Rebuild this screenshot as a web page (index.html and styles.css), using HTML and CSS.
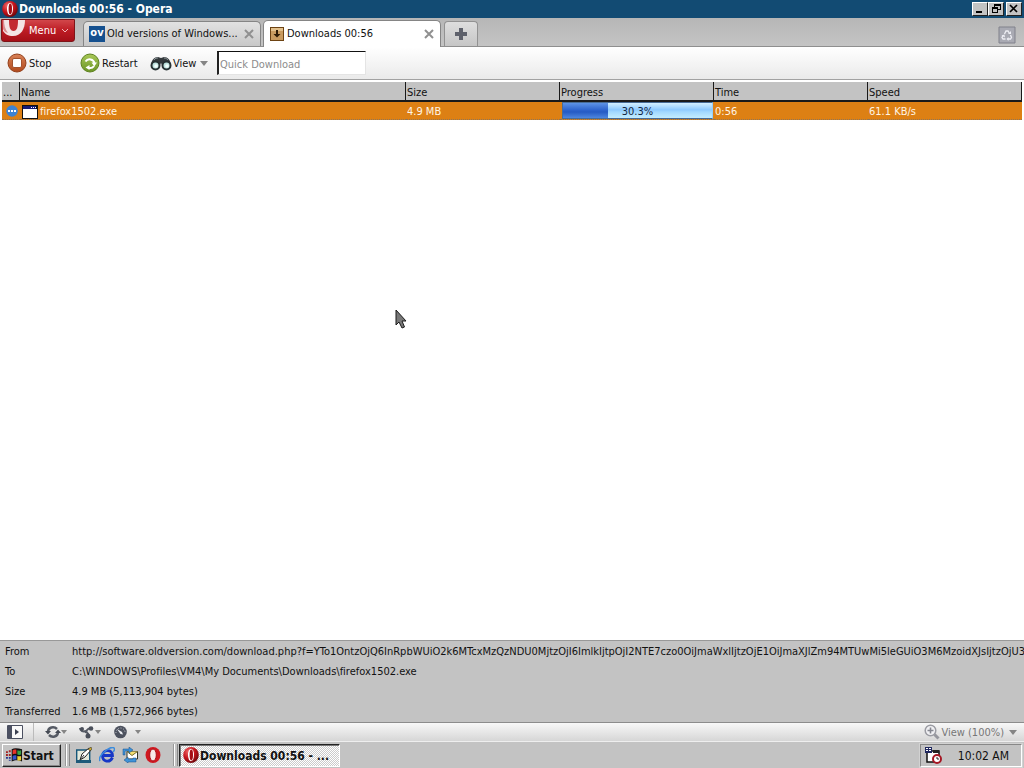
FILE: index.html
```html
<!DOCTYPE html>
<html lang="en">
<head>
<meta charset="utf-8">
<title>Downloads 00:56 - Opera</title>
<link rel="stylesheet" href="styles.css">
</head>
<body>
<svg class="defs" aria-hidden="true">
  <defs>
    <radialGradient id="red" cx=".35" cy=".3" r=".8"><stop offset="0" stop-color="#ef6a6a"/><stop offset=".5" stop-color="#c4141c"/><stop offset="1" stop-color="#5e0508"/></radialGradient>
    <linearGradient id="orange" x2="0" y2="1"><stop offset="0" stop-color="#d98258"/><stop offset="1" stop-color="#b14a1c"/></linearGradient>
    <linearGradient id="green" x2="0" y2="1"><stop offset="0" stop-color="#a9c957"/><stop offset="1" stop-color="#6b9426"/></linearGradient>
    <symbol id="opera" viewBox="0 0 16 16"><ellipse cx="8" cy="8" rx="7.8" ry="8" fill="url(#red)"/><ellipse cx="8" cy="8" rx="3" ry="6.2" fill="#fff"/><ellipse cx="8.3" cy="8" rx="1.7" ry="5.4" fill="#a50d14"/></symbol>
    <symbol id="close" viewBox="0 0 10 10"><path d="M1 1l8 8M9 1L1 9" fill="none" stroke="#909090" stroke-width="2"/></symbol>
  </defs>
</svg>
<div class="window">
  <header class="titlebar">
    <svg class="i16" viewBox="0 0 16 16"><use href="#opera"/></svg>
    <h1>Downloads 00:56 - Opera</h1>
    <div class="winbuttons">
      <button class="winbtn" aria-label="Minimize"><svg viewBox="0 0 12 10"><path d="M2 7h6v2H2z"/></svg></button>
      <button class="winbtn restore" aria-label="Restore"><svg viewBox="0 0 12 10"><path d="M4 0h7v6H8v3H2V3h2zM5 2v1h3v2h2V2zM3 5v3h4V5z" fill-rule="evenodd"/></svg></button>
      <button class="winbtn" aria-label="Close"><svg viewBox="0 0 12 10"><path d="M2 1l7 7M9 1L2 8" fill="none" stroke="#000" stroke-width="1.700"/></svg></button>
    </div>
  </header>

  <nav class="tabbar">
    <button class="menu">
      <svg class="bigo" viewBox="0 0 24 21"><path d="M1 0h22c0 9-4 16-12 16-5 0-8-2-10-5z" fill="#f4e4e5"/><path d="M7 0h9c0 7-1 11-4.500 11S7 7 7 0z" fill="#c32a31"/><path d="M1 0h1c0 5 1 9 4 13-3-1-4-2-5-4z" fill="#b71d25" opacity=".45"/></svg>
      <span>Menu</span>
      <svg class="chev" viewBox="0 0 8 6"><path d="M1 1l3 3 3-3" fill="none" stroke="#f3b9bc"/></svg>
    </button>
    <div class="tab">
      <span class="favicon">ov</span>
      <a href="#old">Old versions of Windows...</a>
      <button class="tabclose" aria-label="Close tab"><svg viewBox="0 0 10 10"><use href="#close"/></svg></button>
    </div>
    <div class="tab active">
      <svg class="i16" viewBox="0 0 16 16"><path fill="#6d4313" d="M1 1h14v14H1z"/><path fill="#c99b60" d="M2 2h12v12H2z"/><path fill="#e2c08c" d="M2 2h12v3H2z"/><path d="M7 4h2v4h2.500L8 11.500 4.500 8H7z" fill="#2e1b06"/></svg>
      <a href="#downloads">Downloads 00:56</a>
      <button class="tabclose" aria-label="Close tab"><svg viewBox="0 0 10 10"><use href="#close"/></svg></button>
    </div>
    <button class="newtab" aria-label="New tab"><svg viewBox="0 0 12 12"><path d="M4 0h4v4h4v4H8v4H4V8H0V4h4z" fill="#5e616b"/></svg></button>
    <button class="trash" aria-label="Closed tabs"><svg viewBox="0 0 18 18"><path d="M1 1h16v16H1z" fill="#a9aab3" stroke="#80818b"/><path d="M6.500 8L8 5h2l1.500 2.500M12.500 9l1 2.500-1 1.500H10M7.500 13H5l-1-1.500 1-2" fill="none" stroke="#eeeef4" stroke-width="1.300"/><path d="M10 8h3V5zM10.500 11v4L8.500 13zM3.500 9.500l3-1 .5 3z" fill="#eeeef4"/></svg></button>
  </nav>

  <div class="toolbar">
    <button class="tool stop"><svg viewBox="0 0 20 20"><circle cx="10" cy="10" r="9" fill="url(#orange)" stroke="#94401b"/><rect x="5.500" y="5.500" width="9" height="9" rx="1.500" fill="#fff" stroke="#a4532d"/></svg><span>Stop</span></button>
    <button class="tool restart"><svg viewBox="0 0 20 20"><circle cx="10" cy="10" r="9" fill="url(#green)" stroke="#5f8321"/><path d="M5.500 8.500A5 5 0 0 1 14.500 10.500M14 13a5 5 0 0 1-5.500 1.800" fill="none" stroke="#fff" stroke-width="2"/><path d="M11.500 9.500h5.500l-2.700 4zM9.500 12v5l-4-2.500z" fill="#fff"/></svg><span>Restart</span></button>
    <button class="tool view"><svg viewBox="0 0 22 20"><path d="M1 11C2 7 4 4 8 4l3 1 3-1c4 0 6 3 7 7l-2 3h-6l-2-4-2 4H3z" fill="#34393c"/><path d="M4 7c1-2 3-2 4-2M14 5c2 0 3 1 4 2" stroke="#8f999c" fill="none"/><circle cx="5.500" cy="12.500" r="4" fill="#bfe3df" stroke="#283234" stroke-width="2"/><circle cx="16.500" cy="12.500" r="4" fill="#bfe3df" stroke="#283234" stroke-width="2"/><circle cx="6" cy="13" r="1.800" fill="#f2fffd"/><circle cx="17" cy="13" r="1.800" fill="#f2fffd"/></svg><span>View</span><i class="arrow"></i></button>
    <input class="quick" type="text" placeholder="Quick Download" aria-label="Quick Download">
  </div>

  <main class="list">
    <table>
      <colgroup><col class="cstat"><col class="cname"><col class="c15"><col class="c15"><col class="c15"><col class="c15"></colgroup>
      <thead><tr><th>...</th><th>Name</th><th>Size</th><th>Progress</th><th>Time</th><th>Speed</th></tr></thead>
      <tbody><tr>
        <td class="stat"><svg viewBox="0 0 12 12"><circle cx="6" cy="6" r="5.800" fill="#3e83d2"/><path d="M2 5h2v2H2zM5 5h2v2H5zM8 5h2v2H8z" fill="#fff"/></svg></td>
        <td><div class="file"><svg viewBox="0 0 16 14"><path d="M0 0h16v14H0z" fill="#111"/><path d="M1 1h13v3H1z" fill="#161b78"/><path d="M1 4h14v9H1z" fill="#fff"/><path d="M9 2h1v1H9zM11 2h1v1h-1zM13 2h1v1h-1z" fill="#fff"/></svg><span>firefox1502.exe</span></div></td>
        <td>4.9 MB</td>
        <td class="prog"><div class="bar"><div class="fill" style="width:30.3%"></div><span>30.3%</span></div></td>
        <td>0:56</td><td>61.1 KB/s</td>
      </tr></tbody>
    </table>
  </main>

  <dl class="details">
    <dt>From</dt><dd>http://software.oldversion.com/download.php?f=YTo1OntzOjQ6InRpbWUiO2k6MTcxMzQzNDU0MjtzOjI6ImlkIjtpOjI2NTE7czo0OiJmaWxlIjtzOjE1OiJmaXJlZm94MTUwMi5leGUiO3M6MzoidXJsIjtzOjU3Oi</dd>
    <dt>To</dt><dd>C:\WINDOWS\Profiles\VM4\My Documents\Downloads\firefox1502.exe</dd>
    <dt>Size</dt><dd>4.9 MB (5,113,904 bytes)</dd>
    <dt>Transferred</dt><dd>1.6 MB (1,572,966 bytes)</dd>
  </dl>

  <div class="status">
    <button class="panel" aria-label="Panels"><svg viewBox="0 0 16 14"><path d="M.5.5h15v13H.5z" fill="#fafafa" stroke="#4b5061"/><path d="M1 1h4v12H1z" fill="#4b5061"/><path d="M8 4v6l4-3z" fill="#3c4152"/></svg></button>
    <button class="sbtn" aria-label="Sync"><svg viewBox="0 0 16 14"><path d="M3 7c0-5 6-6 9-3M13 7c0 5-6 6-9 3" fill="none" stroke="#555a64" stroke-width="2.500"/><path d="M0 6h6L3 9.500zM10 8h6l-3-3.500z" fill="#454a54"/></svg><i class="arrow small"></i></button>
    <button class="sbtn" aria-label="Share"><svg viewBox="0 0 16 14"><path d="M1 3c0 3 3 4 6 3M7 7c1-3 3-4 6-4M6 7c3 0 4 3 3 5" fill="none" stroke="#555a64" stroke-width="2"/><circle cx="3" cy="4" r="2" fill="#4b505b"/><circle cx="12" cy="3.500" r="2.300" fill="#4b505b"/><circle cx="9" cy="11" r="2.500" fill="#4b505b"/></svg><i class="arrow small"></i></button>
    <button class="sbtn turbo" aria-label="Turbo"><svg viewBox="0 0 16 14"><circle cx="7.500" cy="7" r="6.300" fill="#4d525f"/><path d="M3 8a4.500 4.500 0 0 1 9-1" fill="none" stroke="#c9ccd3" stroke-dasharray="1 1.500"/><path d="M4 4l5 3 1 2.500L7.500 9z" fill="#eceef2"/></svg><i class="arrow small"></i></button>
    <button class="zoom"><svg viewBox="0 0 16 16"><circle cx="6.500" cy="6.500" r="5.300" fill="#f1f1f4" stroke="#9b9ca3" stroke-width="1.500"/><path d="M3.500 6.500h6M6.500 3.500v6" stroke="#858790" stroke-width="1.600"/><path d="M10.500 10.500l4 4" stroke="#96979e" stroke-width="3"/></svg><span>View (100%)</span><i class="arrow"></i></button>
  </div>

  <footer class="taskbar">
    <button class="start"><svg viewBox="0 0 18 16"><path d="M6 2c3-2 7-1 11 0v13c-4-2-7-2-11 0z" fill="#111"/><path d="M7 3c1-1 3-1 4-.500V7c-1-.500-3-.500-4 .500z" fill="#ea3329"/><path d="M12 3c1 .500 3 .500 4 0v4.500c-1 .500-3 .500-4 0z" fill="#38a246"/><path d="M7 9c1-1 3-1 4-.500V13c-1-.500-3-.500-4 .500z" fill="#3652cc"/><path d="M12 9c1 .500 3 .500 4 0v4.500c-1 .500-3 .500-4 0z" fill="#efcf31"/><path d="M0 4h2v2H0zM3 3h2v2H3zM0 7h2v2H0zM3 7h2v2H3z" fill="#a52422"/><path d="M0 10h2v2H0zM3 10h2v2H3zM3 13h2v1H3z" fill="#26348f"/></svg><span>Start</span></button>
    <i class="grip"></i>
    <div class="quicklaunch">
      <button aria-label="Show Desktop"><svg viewBox="0 0 16 16"><path d="M.7 3h13v11H.7z" fill="#e4e9dc" stroke="#16577a" stroke-width="1.400"/><path d="M0 13h15v3H0z" fill="#1d5a7a"/><path d="M4 13l2-6 7-6 2 2-6 7z" fill="#fff" stroke="#222"/><path d="M4 13l4-5" stroke="#333" fill="none"/><path d="M12 2l3-2 1 2-2 2z" fill="#c9a62c" stroke="#333" stroke-width=".6"/></svg></button>
      <button aria-label="Internet Explorer"><svg viewBox="0 0 16 16"><path d="M13.500 10.500c-3 6-10 4-10-1.800 0-6.500 10-7 10-.200H5" fill="none" stroke="#1737c6" stroke-width="2.800"/><path d="M1 14C-2 9 12-2 15 1c1 1 0 3-1 4" fill="none" stroke="#3b8cdd" stroke-width="1.500"/></svg></button>
      <button aria-label="Outlook Express"><svg viewBox="0 0 16 16"><path d="M5 4.500h10.500V12H5z" fill="#fff" stroke="#353524"/><path d="M5 4.500l5 4 5.500-4" fill="#f5df72" stroke="#756b29"/><path d="M1 8V2h6V0l4 3-4 3V4H3v4zM14 11v4H6v1l-4-3 4-3v2h5v-1z" fill="#3f93d8" stroke="#154c88" stroke-width=".5"/></svg></button>
      <button aria-label="Opera"><svg viewBox="0 0 16 16"><ellipse cx="8" cy="8" rx="7.500" ry="8" fill="#cf1820"/><ellipse cx="8" cy="8" rx="3.300" ry="6" fill="#f7e8e8" stroke="#a90e15"/></svg></button>
    </div>
    <i class="grip"></i>
    <button class="task"><svg class="i16" viewBox="0 0 16 16"><use href="#opera"/></svg><span>Downloads 00:56 - ...</span></button>
    <div class="tray">
      <svg viewBox="0 0 17 17"><path d="M2 4h12v11H2z" fill="#fff" stroke="#111" stroke-width="1.500"/><path d="M0 0h7v6H0z" fill="#20285f"/><path d="M1 1h2v1H1zM1 3h2v1H1zM4 1h2v1H4zM4 3h2v1H4z" fill="#fff"/><path d="M8 3h6v3H8z" fill="#222"/><circle cx="12" cy="12" r="4" fill="#fff" stroke="#a51724" stroke-width="2"/><path d="M12 10v2h2" fill="none" stroke="#222"/></svg>
      <time>10:02 AM</time>
    </div>
  </footer>
  <svg class="pointer" viewBox="0 0 12 20" aria-hidden="true"><path d="M1 1v15l3-3 3 6 2.500-1L7 12h4z" fill="#777" stroke="#1b1b1b"/></svg>
</div>
</body>
</html>
```

FILE: styles.css
```css
* { box-sizing: border-box; }
body { margin: 0; font: 11px/14px "DejaVu Sans Condensed", "DejaVu Sans", sans-serif; font-stretch: condensed; font-variant-ligatures: none; color: #111; }
button, input { font: inherit; font-stretch: inherit; color: inherit; margin: 0; padding: 0; border: 0; background: none; }
button { display: flex; align-items: center; white-space: nowrap; }
svg { display: block; flex: none; }
a { color: inherit; text-decoration: none; }
.defs { position: absolute; width: 0; height: 0; }
.i16 { width: 16px; height: 16px; }
.window { position: relative; display: flex; flex-direction: column; height: 100vh; overflow: hidden; background: #fff; }

.titlebar { display: flex; align-items: center; flex: none; height: 18px; padding: 0 2px; background: #124b73; color: #fff; }
.titlebar h1 { flex: 1; margin: 0 0 0 1px; font-size: 12px; line-height: 18px; font-weight: bold; }
.winbuttons { display: flex; }
.winbtn { width: 16px; height: 14px; justify-content: center; background: #c3c3c3; border: 1px solid; border-color: #fff #222 #222 #fff; }
.winbtn svg { width: 12px; height: 10px; }
.restore { margin-right: 2px; }

.tabbar { display: flex; align-items: flex-end; flex: none; height: 29px; padding-right: 8px; background: linear-gradient(#b6b6b6, #c4c4c4); border-bottom: 1px solid #8f8f8f; }
.menu { align-self: flex-start; width: 74px; height: 23px; margin: 1px 8px 0 1px; color: #fff; background: linear-gradient(#d2474b, #bd1c24 50%, #a50f18); border: 1px solid #7e1519; border-radius: 0 0 3px 3px; }
.bigo { width: 24px; height: 21px; margin-right: 3px; }
.menu span { flex: 1; text-align: left; }
.chev { width: 8px; height: 6px; margin-right: 5px; }
.tab { display: flex; align-items: center; gap: 2px; width: 178px; height: 25px; padding: 0 6px 0 5px; background: linear-gradient(#e2e2e2, #c8c8c8); border: 1px solid #858585; border-bottom: 0; border-radius: 5px 5px 0 0; }
.tab a { flex: 1; white-space: nowrap; }
.favicon { width: 16px; height: 16px; background: #15508f; color: #fff; font-weight: bold; line-height: 14px; text-align: center; }
.tab.active { height: 27px; margin: 0 3px -1px 2px; padding-bottom: 1px; background: #fff; }
.tabclose svg { width: 10px; height: 10px; }
.newtab { width: 34px; height: 25px; justify-content: center; background: linear-gradient(#dedede, #c6c6c6); border: 1px solid #929292; border-bottom: 0; border-radius: 4px 4px 0 0; }
.newtab svg { width: 12px; height: 12px; }
.trash { margin: 0 0 2px auto; }
.trash svg { width: 18px; height: 18px; }

.toolbar { display: flex; align-items: center; flex: none; height: 33px; padding: 0 7px; background: linear-gradient(#fff, #eaeaea); border-bottom: 1px solid #a2a2a2; }
.tool svg { width: 20px; height: 20px; }
.tool span, .status span { padding-top: 2px; }
.stop, .restart { gap: 2px; }
.stop { width: 73px; }
.restart { width: 70px; }
.view { width: 67px; }
.tool.view svg { width: 22px; margin-right: 1px; }
.arrow { width: 0; height: 0; margin-left: 4px; border: 4px solid transparent; border-top: 5px solid #858585; border-bottom: 0; }
.arrow.small { margin-left: 0; border-width: 4px 3px 0; }
.quick { width: 149px; height: 24px; padding: 3px 1px 0; background: #fff; border: 1px solid #e4e4e4; border-top-color: #111; border-left: 2px solid #222; }
.quick::placeholder { color: #8c8c8c; opacity: 1; }

.list { flex: 1; min-height: 0; padding: 2px 2px 0; }
table { width: 100%; border-collapse: separate; border-spacing: 0; table-layout: fixed; }
.cstat { width: 18px; }
.cname { width: 386px; }
th { height: 20px; padding: 3px 0 0 1px; text-align: left; font-weight: normal; background: #c3c3c3; border-right: 1px solid #1a1a1a; border-bottom: 2px solid #1a1a1a; white-space: nowrap; }
td { height: 18px; padding: 2px 0 0 1px; color: #fff5e6; background: #dd8014; border-bottom: 1px dotted #8e7659; }
.stat { padding: 0 0 0 4px; }
.stat svg { width: 12px; height: 12px; }
.file { display: flex; align-items: center; gap: 2px; margin-left: 1px; }
.file svg { width: 16px; height: 14px; }
.prog { padding: 0; }
.bar { position: relative; height: 17px; margin: 0 1px 0 2px; background: linear-gradient(#d4f0ff, #8dcaff 45%, #a3d9ff 60%, #c3edff); border: 1px solid #476c97; border-right-color: #96cefb; color: #14263f; text-align: center; line-height: 18px; }
.fill { position: absolute; inset: 0 auto 0 0; background: linear-gradient(#5d93e5, #2b61cb 50%, #255bc4 60%, #4d86df); }
.bar span { position: relative; }

.details { display: grid; grid-template-columns: 67px 1fr; flex: none; margin: 0; padding: 1px 0 0 5px; background: #c3c3c3; border-top: 1px solid #989898; line-height: 20px; white-space: nowrap; overflow: hidden; }
.details dd { margin: 0; min-width: 0; overflow: hidden; }

.status { display: flex; align-items: center; flex: none; height: 19px; padding: 0 7px; background: linear-gradient(#f8f8f8, #d6d6d6); border-top: 1px solid #8c8c8c; }
.panel { width: 27px; height: 18px; margin-right: 11px; border-right: 1px solid #bbb; }
.panel svg, .sbtn svg { width: 16px; height: 14px; }
.sbtn { width: 34px; }
.turbo .arrow { margin-left: 6px; }
.zoom { margin-left: auto; color: #777; gap: 1px; }
.zoom svg { width: 16px; height: 16px; }

.taskbar { display: flex; align-items: center; flex: none; height: 27px; padding: 0 2px; background: #c3c3c3; border-top: 1px solid #eee; }
.start, .task { height: 23px; font-size: 12px; font-weight: bold; border: 1px solid; }
.start span, .task span, .tray time { padding-top: 2px; }
.start { width: 59px; padding-left: 3px; gap: 0; border-color: #fff #222 #222 #fff; box-shadow: inset -1px -1px #888; }
.start svg { width: 17px; height: 16px; }
.grip { width: 5px; height: 22px; margin: 0 2px 0 4px; border: 1px solid; border-width: 0 1px; border-color: #999 #888 #888 #999; box-shadow: inset 1px 0 #fff; }
.quicklaunch { display: flex; gap: 7px; width: 93px; margin-left: 4px; }
.quicklaunch svg { width: 16px; height: 16px; }
.task { width: 161px; margin-left: -1px; padding-left: 3px; gap: 1px; border-color: #222 #fff #fff #222; box-shadow: inset 1px 1px #777; background: repeating-conic-gradient(#fff 0 25%, #cbcbcb 0 50%) 0 0 / 2px 2px; }
.tray { display: flex; align-items: center; justify-content: space-between; width: 102px; height: 23px; margin-left: auto; padding: 0 12px 0 4px; border: 1px solid; border-color: #888 #fff #fff #888; outline: 1px solid #d2d2d2; }
.tray svg { width: 17px; height: 17px; }
.tray time { font-size: 12px; }
.pointer { position: absolute; left: 395px; top: 309px; width: 12px; height: 20px; }
```
